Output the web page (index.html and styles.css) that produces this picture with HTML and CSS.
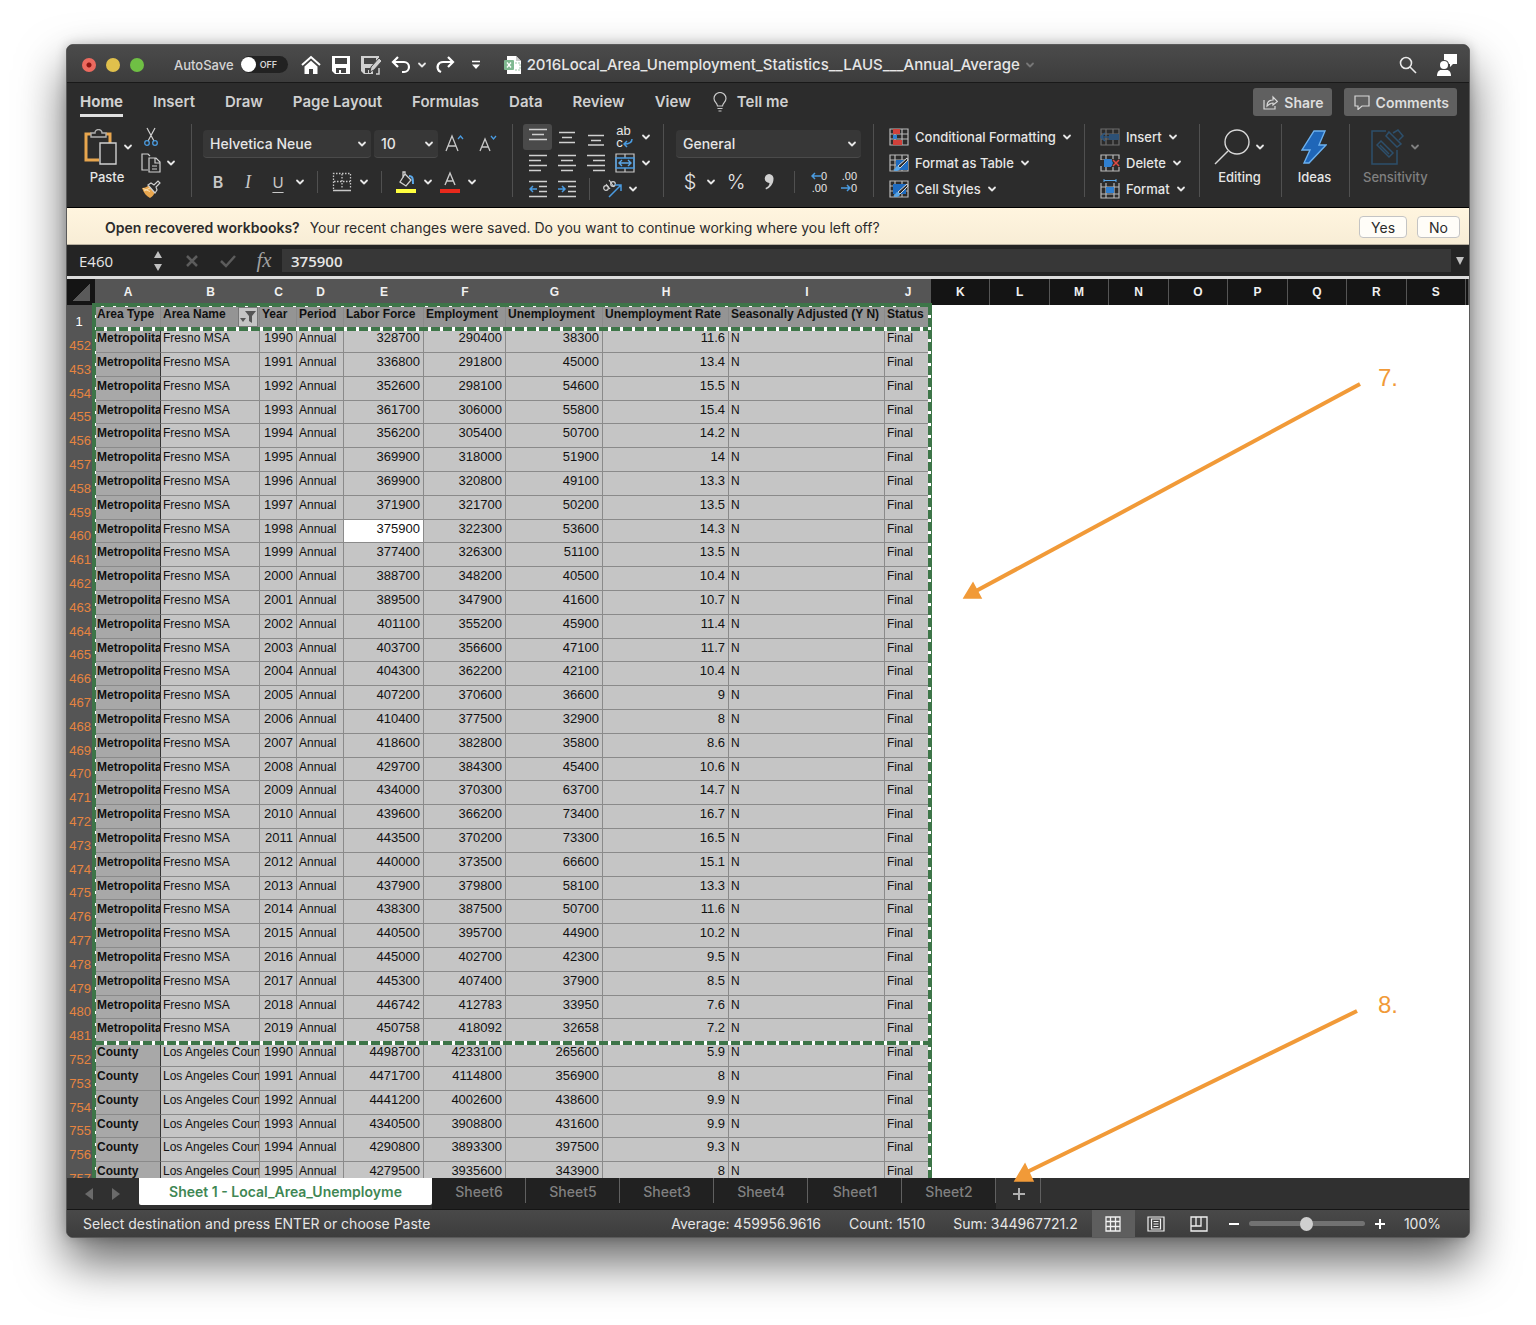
FILE: index.html
```html
<!DOCTYPE html>
<html lang="en">
<head>
  <meta charset="UTF-8" />
  <meta name="viewport" content="width=device-width, initial-scale=1" />
  <title>2016Local_Area_Unemployment_Statistics__LAUS___Annual_Average</title>
  <link rel="stylesheet" href="styles.css">
</head>
<body>

  <svg class="symbols" width="0" height="0">
    <symbol id="chev" viewBox="0 0 10 10"><path d="M2 3.5l3 3 3-3" fill="none" stroke="currentColor" stroke-width="1.8" stroke-linecap="round" stroke-linejoin="round"/></symbol>
    <symbol id="grid-icon" viewBox="0 0 20 18"><path d="M1 1h18v16H1zM1 6h18M1 11h18M6 1v16M13 1v16" fill="none" stroke="#b9b9b9" stroke-width="1.2"/></symbol>
    <symbol id="brush-icon" viewBox="0 0 20 18"><path d="M18 4L9 12l2 2 8-8z" fill="#2c2c2c" stroke="#d8d8d8"/><path d="M9 12c-3 0-2 3-5 4 3 2 7 1 7-2z" fill="#5aa7e8"/></symbol>
  </svg>

  <div class="window">

    <header class="titlebar">
      <div class="lights">
        <button class="light red" aria-label="Close"></button>
        <button class="light yellow" aria-label="Minimize"></button>
        <button class="light green" aria-label="Zoom"></button>
      </div>
      <label class="autosave">AutoSave
        <input type="checkbox">
        <span class="switch">OFF</span>
      </label>
      <div class="quick">
        <button aria-label="Home"><svg width="20" height="20" viewBox="0 0 20 20"><path d="M1 10l9-8 9 8" fill="none" stroke="#fff" stroke-width="2"/><path d="M3.500 11.500L10 5.800l6.500 5.700V19H12v-5H8v5H3.500z" fill="#fff"/></svg></button>
        <button aria-label="Save"><svg width="20" height="20" viewBox="0 0 20 20"><path d="M1 1h18v18H4l-3-3z" fill="#fff"/><path d="M4 3h12v6H4zM5 13h10v5h-5v-3H8v3H5z" fill="#444"/></svg></button>
        <button aria-label="Save as"><svg width="22" height="20" viewBox="0 0 22 20"><path d="M1 1h18v7l-6 7v4H4l-3-3z" fill="#d0d0d0"/><path d="M4 3h12v5l-1 1H4zM5 13h6v5H9v-3H8v3H5z" fill="#444"/><path d="M10 17l1-5 8-9 3 3-8 9z" fill="#d0d0d0" stroke="#444"/><path d="M16 19h3v-6" fill="none" stroke="#d0d0d0" stroke-width="1.500"/></svg></button>
        <button aria-label="Undo"><svg width="20" height="20" viewBox="0 0 20 20"><path d="M7 2L2 7l5 5M2 7h11a5 5 0 0 1 0 10h-2" fill="none" stroke="#fff" stroke-width="2.200"/></svg></button>
        <button class="drop" aria-label="Undo list"><svg width="10" height="10"><use href="#chev"/></svg></button>
        <button class="redo" aria-label="Redo"><svg width="20" height="20" viewBox="0 0 20 20"><path d="M13 2l5 5-5 5M18 7H8c-5 0-7 5-4 9l2 1" fill="none" stroke="#fff" stroke-width="2.200"/></svg></button>
        <button class="more" aria-label="Customize"><svg width="10" height="10" viewBox="0 0 10 10"><path d="M1 1.500h8" stroke="#fff" stroke-width="1.500"/><path d="M1 4.500h8L5 9z" fill="#fff"/></svg></button>
      </div>
      <div class="filename">
        <svg width="18" height="20" viewBox="0 0 18 20"><path d="M3 1h9l5 5v13H3z" fill="#fff"/><path d="M12 1v5h5" fill="#ccc"/><path d="M11 8h5v7h-5" fill="none" stroke="#9fc7ab" stroke-dasharray="2 1"/><rect y="5" width="10" height="10" rx="1" fill="#7fb890"/><path d="M3 7.500l4 5M7 7.500l-4 5" stroke="#fff" stroke-width="1.300"/></svg>
        <span>2016Local_Area_Unemployment_Statistics__LAUS___Annual_Average</span>
        <svg class="faint" width="10" height="10"><use href="#chev"/></svg>
      </div>
      <div class="account">
        <button aria-label="Search"><svg width="18" height="18" viewBox="0 0 18 18" fill="none" stroke="#e8e8e8" stroke-width="1.600"><circle cx="7" cy="7" r="5.500"/><path d="M11 11l6 6"/></svg></button>
        <button aria-label="Account"><svg width="22" height="22" viewBox="0 0 22 22" fill="#fff"><path d="M8 0h13v10h-4l-3 3v-3h-1a5 5 0 0 0-5-4z"/><circle cx="8" cy="11" r="4"/><path d="M1 22c0-4 2-6 4-6h6c2 0 4 2 4 6z"/></svg></button>
      </div>
    </header>

    <nav class="tabs">
      <a class="active" href="#home">Home</a>
      <a href="#insert">Insert</a>
      <a href="#draw">Draw</a>
      <a href="#layout">Page Layout</a>
      <a href="#formulas">Formulas</a>
      <a href="#data">Data</a>
      <a href="#review">Review</a>
      <a href="#view">View</a>
      <a class="tell" href="#tell"><svg width="14" height="20" viewBox="0 0 14 20" fill="none" stroke="#c8c8c8" stroke-width="1.200"><path d="M4.500 14c0-3-3.500-4-3.500-7.500a6 6 0 0 1 12 0C13 10 9.500 11 9.500 14zM4.500 16.500h5M5.500 19h3"/></svg>Tell me</a>
      <div class="actions">
        <button><svg width="15" height="15" viewBox="0 0 15 15" fill="none" stroke="#d8d8d8" stroke-width="1.200"><path d="M1 5v9h11v-3M4 11c0-4 2-6 6-6V2l4.500 4.500L10 10V8c-3 0-4 1-6 3z"/></svg>Share</button>
        <button><svg width="16" height="15" viewBox="0 0 16 15" fill="none" stroke="#d8d8d8" stroke-width="1.200"><path d="M1 1h14v10H8l-4 3.500V11H1z"/></svg>Comments</button>
      </div>
    </nav>

    <div class="ribbon">
      <section class="group clipboard">
        <button class="big">
          <span class="icon-row"><svg width="34" height="36" viewBox="0 0 34 36" fill="none"><path d="M7 5H2v26h13M22 5h4v9" stroke="#e8a64e" stroke-width="3"/><path d="M7 8V4h4a3.500 3.500 0 0 1 7 0h4v4z" stroke="#b0b0b0" stroke-width="1.400"/><path d="M16 14h16v21H16z" fill="#2c2c2c" stroke="#d0d0d0" stroke-width="1.400"/></svg><svg width="10" height="10"><use href="#chev"/></svg></span>
          Paste
        </button>
        <div class="stack">
          <button aria-label="Cut"><svg width="20" height="20" viewBox="0 0 20 20" fill="none"><path d="M6 1l7 13M14 1L7 14" stroke="#d0d0d0" stroke-width="1.200"/><circle cx="6" cy="16" r="2.300" stroke="#4a9be0" stroke-width="1.300"/><circle cx="14" cy="16" r="2.300" stroke="#4a9be0" stroke-width="1.300"/></svg></button>
          <button aria-label="Copy"><svg width="20" height="20" viewBox="0 0 20 20" fill="none" stroke="#d0d0d0" stroke-width="1.200"><path d="M7 17H1V1h6l2 2M8 5h7l4 4v10H8zM14 5v5h5M11 13h5M11 16h5"/></svg><svg width="10" height="10"><use href="#chev"/></svg></button>
          <button aria-label="Format painter"><svg width="20" height="20" viewBox="0 0 20 20"><path d="M1 9c3 0 5-1 7-3l6 7c-1 3-3 5-5 6C5 17 3 14 1 9z" fill="#e8a64e"/><path d="M3 12l6-3M2 9.500l7 3" stroke="#fbe0b0"/><path d="M7 6l3-2 3 2 4-4 2 2-4 4 1 3-2 3z" fill="#2c2c2c" stroke="#d0d0d0" stroke-width="1.200"/></svg></button>
        </div>
      </section>

      <section class="group font">
        <div class="row">
          <div class="select wide"><select aria-label="Font"><option>Helvetica Neue</option></select><svg width="10" height="10"><use href="#chev"/></svg></div>
          <div class="select small"><select aria-label="Font size"><option>10</option></select><svg width="10" height="10"><use href="#chev"/></svg></div>
          <button class="tool size" aria-label="Increase font size"><svg width="20" height="20" viewBox="0 0 20 20" fill="none" stroke="#c8c8c8" stroke-width="1.300"><path d="M1 17L7 2l6 15M3 12h8"/><path d="M13 5l2.500-3L18 5" stroke="#4a9be0"/></svg></button>
          <button class="tool size" aria-label="Decrease font size"><svg width="18" height="20" viewBox="0 0 18 20" fill="none" stroke="#c8c8c8" stroke-width="1.300"><path d="M1 17L6 5l5 12M3 13h6"/><path d="M12 2l2.500 3L17 2" stroke="#4a9be0"/></svg></button>
        </div>
        <div class="row">
          <button class="tool bold">B</button>
          <button class="tool italic">I</button>
          <button class="tool underline">U</button>
          <button class="drop" aria-label="Underline style"><svg width="10" height="10"><use href="#chev"/></svg></button>
          <span class="sep"></span>
          <button class="tool" aria-label="Borders"><svg width="20" height="20" viewBox="0 0 20 20" fill="none" stroke="#c8c8c8"><path d="M1.500 17V1.500h17V17M10 2v15M2 9.500h16" stroke-dasharray="1.500 1.500" stroke-width="1.300"/><path d="M1 18.500h18" stroke-width="1.500"/></svg></button>
          <button class="drop" aria-label="Border list"><svg width="10" height="10"><use href="#chev"/></svg></button>
          <span class="sep"></span>
          <button class="tool" aria-label="Fill color"><svg width="20" height="22" viewBox="0 0 20 22" fill="none"><path d="M9 3l6 6-5 6-6-4zM9 3V1H7v6" stroke="#d0d0d0" stroke-width="1.300"/><path d="M13 5c4 0 4 3 4 8" stroke="#5aa7e8" stroke-width="2"/><path d="M0 18h20v4H0z" fill="#ffff3f"/></svg></button>
          <button class="drop" aria-label="Fill colors"><svg width="10" height="10"><use href="#chev"/></svg></button>
          <button class="tool" aria-label="Font color"><svg width="20" height="22" viewBox="0 0 20 22" fill="none"><path d="M5 14l5-12 5 12M6.500 10h7" stroke="#c8c8c8" stroke-width="1.400"/><path d="M0 18h20v4H0z" fill="#e8291c"/></svg></button>
          <button class="drop" aria-label="Font colors"><svg width="10" height="10"><use href="#chev"/></svg></button>
        </div>
      </section>

      <section class="group align">
        <div class="row">
          <button class="tool on" aria-label="Top align"><svg width="18" height="18" viewBox="0 0 18 18"><path d="M0 1.500h18M3 6.500h12M0 11.500h18" stroke="#d0d0d0" stroke-width="1.400"/></svg></button>
          <button class="tool" aria-label="Middle align"><svg width="18" height="18" viewBox="0 0 18 18"><path d="M1 4.500h16M4 9.500h10M1 14.500h16" stroke="#d0d0d0" stroke-width="1.400"/></svg></button>
          <button class="tool" aria-label="Bottom align"><svg width="18" height="18" viewBox="0 0 18 18"><path d="M1 7.500h16M4 12.500h10M1 17h16" stroke="#d0d0d0" stroke-width="1.400"/></svg></button>
          <button class="tool wrap" aria-label="Wrap text"><span>ab<br>c</span><svg width="10" height="9" viewBox="0 0 10 9" fill="none" stroke="#4a9be0" stroke-width="1.500"><path d="M9 0c0 4-3 5-8 5M4 2L1 5l3 3"/></svg></button>
          <button class="drop" aria-label="Wrap options"><svg width="10" height="10"><use href="#chev"/></svg></button>
        </div>
        <div class="row">
          <button class="tool" aria-label="Align left"><svg width="18" height="18" viewBox="0 0 18 18"><path d="M0 1.500h18M0 6.500h12M0 11.500h18M0 16.500h12" stroke="#d0d0d0" stroke-width="1.400"/></svg></button>
          <button class="tool" aria-label="Center"><svg width="18" height="18" viewBox="0 0 18 18"><path d="M0 1.500h18M3 6.500h12M0 11.500h18M3 16.500h12" stroke="#d0d0d0" stroke-width="1.400"/></svg></button>
          <button class="tool" aria-label="Align right"><svg width="18" height="18" viewBox="0 0 18 18"><path d="M0 1.500h18M6 6.500h12M0 11.500h18M6 16.500h12" stroke="#d0d0d0" stroke-width="1.400"/></svg></button>
          <button class="tool" aria-label="Merge"><svg width="20" height="20" viewBox="0 0 20 20" fill="none"><path d="M1 1h18v18H1zM10 1v4M10 15v4" stroke="#c8c8c8" stroke-width="1.200"/><path d="M1 5h18v10H1z" stroke="#4a9be0" stroke-width="1.400"/><path d="M4 10h12M7 7l-3 3 3 3M13 7l3 3-3 3" stroke="#5aa7e8" stroke-width="1.400"/></svg></button>
          <button class="drop" aria-label="Merge options"><svg width="10" height="10"><use href="#chev"/></svg></button>
        </div>
        <div class="row">
          <button class="tool" aria-label="Decrease indent"><svg width="18" height="18" viewBox="0 0 18 18" fill="none"><path d="M0 1.500h18M10 6.500h8M10 11.500h8M0 16.500h18" stroke="#d0d0d0" stroke-width="1.400"/><path d="M8 9H1M4 6L1 9l3 3" stroke="#4a9be0" stroke-width="1.500"/></svg></button>
          <button class="tool" aria-label="Increase indent"><svg width="18" height="18" viewBox="0 0 18 18" fill="none"><path d="M0 1.500h18M10 6.500h8M10 11.500h8M0 16.500h18" stroke="#d0d0d0" stroke-width="1.400"/><path d="M0 9h7M4 6l3 3-3 3" stroke="#4a9be0" stroke-width="1.500"/></svg></button>
          <span class="sep"></span>
          <button class="tool" aria-label="Orientation"><svg width="20" height="20" viewBox="0 0 20 20" fill="none"><circle cx="4" cy="9" r="2.300" stroke="#d0d0d0" stroke-width="1.200"/><path d="M4 5l4 5M7 1l5 7" stroke="#d0d0d0" stroke-width="1.200"/><circle cx="11" cy="5" r="2.300" stroke="#d0d0d0" stroke-width="1.200"/><path d="M7 18L19 6M13 6h6v6" stroke="#4a9be0" stroke-width="1.500"/></svg></button>
          <button class="drop" aria-label="Orientation options"><svg width="10" height="10"><use href="#chev"/></svg></button>
        </div>
      </section>

      <section class="group number">
        <div class="row">
          <div class="select format"><select aria-label="Number format"><option>General</option></select><svg width="10" height="10"><use href="#chev"/></svg></div>
        </div>
        <div class="row">
          <button class="tool sign">$</button>
          <button class="drop" aria-label="Currency"><svg width="10" height="10"><use href="#chev"/></svg></button>
          <button class="tool sign percent">%</button>
          <button class="tool" aria-label="Comma style"><svg width="10" height="16" viewBox="0 0 10 16"><path d="M5 0a4.500 4.500 0 0 1 4.500 5C9.500 10 6 14 2 15.500L1.500 14C4 13 5.500 11 5.500 9A4.500 4.500 0 1 1 5 0z" fill="#d0d0d0"/></svg></button>
          <span class="sep"></span>
          <button class="tool dec"><span><svg width="10" height="8" viewBox="0 0 10 8" fill="none" stroke="#4a9be0" stroke-width="1.500"><path d="M10 4H1M4 1L1 4l3 3"/></svg>0</span><span>.00</span></button>
          <button class="tool dec"><span>.00</span><span><svg width="10" height="8" viewBox="0 0 10 8" fill="none" stroke="#4a9be0" stroke-width="1.500"><path d="M0 4h9M6 1l3 3-3 3"/></svg>0</span></button>
        </div>
      </section>

      <section class="group styles">
        <button class="line"><svg width="20" height="18" viewBox="0 0 20 18"><use href="#grid-icon"/><path d="M4 1h7v5H4zM4 12h9v5H4z" fill="#d0413b"/><path d="M4 7h4v4H4z" fill="#2f7fd0"/></svg>Conditional Formatting<svg width="10" height="10"><use href="#chev"/></svg></button>
        <button class="line"><svg width="20" height="18" viewBox="0 0 20 18"><use href="#grid-icon"/><path d="M7 6h12v10H7z" fill="#1e6bc0"/><use href="#brush-icon"/></svg>Format as Table<svg width="10" height="10"><use href="#chev"/></svg></button>
        <button class="line"><svg width="20" height="18" viewBox="0 0 20 18"><use href="#grid-icon"/><path d="M4 4h13v10H4z" fill="#1e6bc0"/><use href="#brush-icon"/></svg>Cell Styles<svg width="10" height="10"><use href="#chev"/></svg></button>
      </section>

      <section class="group cells">
        <button class="line"><svg width="20" height="18" viewBox="0 0 20 18"><g opacity=".45"><use href="#grid-icon"/><path d="M9 6h10v6H9z" fill="#2f7fd0"/></g><path d="M10 9H2M5 5L1 9l4 4" fill="none" stroke="#2b5680" stroke-width="1.600"/></svg>Insert<svg width="10" height="10"><use href="#chev"/></svg></button>
        <button class="line"><svg width="20" height="18" viewBox="0 0 20 18"><use href="#grid-icon"/><path d="M0 6h4v6H0zM12 5h8v8h-8z" fill="#2c2c2c"/><path d="M4 5h7l2 4-2 4H4z" fill="#2f7fd0"/><path d="M13 6l6 6M19 6l-6 6" stroke="#e04b45" stroke-width="1.500"/></svg>Delete<svg width="10" height="10"><use href="#chev"/></svg></button>
        <button class="line"><svg width="20" height="20" viewBox="0 0 20 20"><path d="M1 4v15h18V4M1 8h18M1 15h18M6 4v15M14 4v15" fill="none" stroke="#b9b9b9" stroke-width="1.200"/><path d="M6 8h8v6H6z" fill="#2f7fd0"/><path d="M4 1.500h12M4 0v3M16 0v3" stroke="#5aa7e8"/></svg>Format<svg width="10" height="10"><use href="#chev"/></svg></button>
      </section>

      <section class="group editing">
        <button class="big"><span class="icon-row"><svg width="36" height="36" viewBox="0 0 36 36" fill="none" stroke="#d8d8d8" stroke-width="1.400"><circle cx="23" cy="13" r="12"/><path d="M14 22L1 35"/></svg><svg width="10" height="10"><use href="#chev"/></svg></span>Editing</button>
      </section>
      <section class="group ideas">
        <button class="big"><span class="icon-row"><svg width="26" height="34" viewBox="0 0 26 34"><path d="M13 1h11l-6 14h7L8 33H3l6-13H1z" fill="#1f66b8" stroke="#6bb0ee" stroke-width="1.400"/></svg></span>Ideas</button>
      </section>
      <section class="group sensitivity">
        <button class="big" disabled><span class="icon-row"><svg width="34" height="36" viewBox="0 0 34 36" fill="none" stroke="#2d4f6b" stroke-width="1.500"><path d="M15 2H1v33h25V21M6 16l4-4 12 12-4 4zM9 16l9 9M18 3l12 12-4 3L15 7zM22 4l5-3 5 6-4 4"/></svg><svg width="10" height="10"><use href="#chev"/></svg></span>Sensitivity</button>
      </section>
    </div>

    <div class="message">
      <p><strong>Open recovered workbooks?</strong> Your recent changes were saved. Do you want to continue working where you left off?</p>
      <button>Yes</button>
      <button>No</button>
    </div>

    <div class="formula-bar">
      <input class="name-box" type="text" value="E460" aria-label="Name box">
      <svg width="10" height="22" viewBox="0 0 10 22" fill="#c0c0c0"><path d="M1 8l4-7 4 7zM1 14h8l-4 7z"/></svg>
      <button aria-label="Cancel"><svg width="14" height="14" viewBox="0 0 14 14" stroke="#5c5c5c" stroke-width="2.500"><path d="M2 2l10 10M12 2L2 12"/></svg></button>
      <button aria-label="Enter"><svg width="18" height="14" viewBox="0 0 18 14" fill="none" stroke="#5c5c5c" stroke-width="2.500"><path d="M2 7l5 5L16 2"/></svg></button>
      <button class="fx">fx</button>
      <input class="formula" type="text" value="375900" aria-label="Formula">
      <button class="expand" aria-label="Expand"><svg width="10" height="10" viewBox="0 0 10 10"><path d="M1 1h8L5 9z" fill="#c0c0c0"/></svg></button>
    </div>

    <main class="sheet">
      <table>
        <colgroup>
          <col class="c-row"><col class="c-a"><col class="c-b"><col class="c-c"><col class="c-d"><col class="c-e">
          <col class="c-f"><col class="c-g"><col class="c-h"><col class="c-i"><col class="c-j">
          <col><col><col><col><col><col><col><col><col><col class="c-end">
        </colgroup>
        <thead>
          <tr>
            <th class="corner"></th>
            <th>A</th><th>B</th><th>C</th><th>D</th><th>E</th><th>F</th><th>G</th><th>H</th><th>I</th><th>J</th>
            <th class="free">K</th><th class="free">L</th><th class="free">M</th><th class="free">N</th><th class="free">O</th><th class="free">P</th><th class="free">Q</th><th class="free">R</th><th class="free">S</th><th class="free"></th>
          </tr>
        </thead>
        <tbody id="rows">
          <tr class="names">
            <th>1</th>
            <td>Area Type</td>
            <td>Area Name<button class="filter" aria-label="Filter"><svg width="16" height="14" viewBox="0 0 16 14" fill="#555"><path d="M5 1h11l-4 5v7l-3-2V6zM0 8h6l-3 4z"/></svg></button></td>
            <td>Year</td><td>Period</td><td>Labor Force</td><td>Employment</td><td>Unemployment</td><td>Unemployment Rate</td><td>Seasonally Adjusted (Y N)</td><td>Status</td>
          </tr>
        </tbody>
      </table>
      <div class="ants top"></div>
      <div class="ants under-names"></div>
      <div class="ants under-fresno"></div>
      <div class="ants left"></div>
      <div class="ants right"></div>
    </main>

    <div class="sheet-tabs">
      <button class="move" aria-label="Previous sheet"><svg width="10" height="14" viewBox="0 0 10 14"><path d="M9 1v12L1 7z" fill="#6a6a6a"/></svg></button>
      <button class="move" aria-label="Next sheet"><svg width="10" height="14" viewBox="0 0 10 14"><path d="M1 1v12l8-6z" fill="#6a6a6a"/></svg></button>
      <button class="tab active">Sheet 1 - Local_Area_Unemployme</button>
      <button class="tab">Sheet6</button>
      <button class="tab">Sheet5</button>
      <button class="tab">Sheet3</button>
      <button class="tab">Sheet4</button>
      <button class="tab">Sheet1</button>
      <button class="tab">Sheet2</button>
      <button class="add" aria-label="Add sheet"><svg width="12" height="12" viewBox="0 0 12 12" stroke="#b0b0b0" stroke-width="2"><path d="M6 0v12M0 6h12"/></svg></button>
    </div>

    <footer class="status">
      <span class="hint">Select destination and press ENTER or choose Paste</span>
      <span>Average: 459956.9616</span>
      <span>Count: 1510</span>
      <span>Sum: 344967721.2</span>
      <div class="views">
        <button class="on" aria-label="Normal view"><svg width="16" height="16" viewBox="0 0 16 16" fill="none" stroke="#f0f0f0" stroke-width="1.300"><path d="M1 1h14v14H1zM1 5.500h14M1 10.500h14M5.500 1v14M10.500 1v14"/></svg></button>
        <button aria-label="Page layout view"><svg width="18" height="16" viewBox="0 0 18 16" fill="none" stroke="#f0f0f0" stroke-width="1.200"><path d="M1 1h16v14H1zM4.500 3h9v10h-9zM6.500 5.500h5M6.500 8h5M6.500 10.500h5"/></svg></button>
        <button aria-label="Page break view"><svg width="18" height="16" viewBox="0 0 18 16" fill="none" stroke="#f0f0f0" stroke-width="1.300"><path d="M1 1h16v14H1zM1 10h10V1M6 1v9"/></svg></button>
      </div>
      <div class="zoom">
        <button aria-label="Zoom out"><svg width="10" height="10" viewBox="0 0 10 10"><path d="M0 5h10" stroke="#fff" stroke-width="2"/></svg></button>
        <input type="range" min="0" max="100" value="50" aria-label="Zoom">
        <button aria-label="Zoom in"><svg width="10" height="10" viewBox="0 0 10 10"><path d="M0 5h10M5 0v10" stroke="#fff" stroke-width="2"/></svg></button>
        <output>100%</output>
      </div>
    </footer>

    <!-- tutorial notes over the sheet -->
    <div class="note seven">
      <svg width="400" height="218" viewBox="0 0 400 218"><path d="M398 2L14 209" stroke="#f19a38" stroke-width="4"/><path d="M2 216l9-15 8 15z" fill="#f19a38" stroke="#f19a38" stroke-width="1.500"/></svg>
      <span>7.</span>
    </div>
    <div class="note eight">
      <svg width="346" height="174" viewBox="0 0 346 174"><path d="M344 2L14 163" stroke="#f19a38" stroke-width="4"/><path d="M2 172l10-17 8 17z" fill="#f19a38" stroke="#f19a38" stroke-width="1.500"/></svg>
      <span>8.</span>
    </div>
  </div>

  <script>
    // row number, year, labor force, employment, unemployment, rate
    const fresno = [
      [452, 1990, 328700, 290400, 38300, 11.6],
      [453, 1991, 336800, 291800, 45000, 13.4],
      [454, 1992, 352600, 298100, 54600, 15.5],
      [455, 1993, 361700, 306000, 55800, 15.4],
      [456, 1994, 356200, 305400, 50700, 14.2],
      [457, 1995, 369900, 318000, 51900, 14],
      [458, 1996, 369900, 320800, 49100, 13.3],
      [459, 1997, 371900, 321700, 50200, 13.5],
      [460, 1998, 375900, 322300, 53600, 14.3],
      [461, 1999, 377400, 326300, 51100, 13.5],
      [462, 2000, 388700, 348200, 40500, 10.4],
      [463, 2001, 389500, 347900, 41600, 10.7],
      [464, 2002, 401100, 355200, 45900, 11.4],
      [465, 2003, 403700, 356600, 47100, 11.7],
      [466, 2004, 404300, 362200, 42100, 10.4],
      [467, 2005, 407200, 370600, 36600, 9],
      [468, 2006, 410400, 377500, 32900, 8],
      [469, 2007, 418600, 382800, 35800, 8.6],
      [470, 2008, 429700, 384300, 45400, 10.6],
      [471, 2009, 434000, 370300, 63700, 14.7],
      [472, 2010, 439600, 366200, 73400, 16.7],
      [473, 2011, 443500, 370200, 73300, 16.5],
      [474, 2012, 440000, 373500, 66600, 15.1],
      [475, 2013, 437900, 379800, 58100, 13.3],
      [476, 2014, 438300, 387500, 50700, 11.6],
      [477, 2015, 440500, 395700, 44900, 10.2],
      [478, 2016, 445000, 402700, 42300, 9.5],
      [479, 2017, 445300, 407400, 37900, 8.5],
      [480, 2018, 446742, 412783, 33950, 7.6],
      [481, 2019, 450758, 418092, 32658, 7.2]
    ];
    const losAngeles = [
      [752, 1990, 4498700, 4233100, 265600, 5.9],
      [753, 1991, 4471700, 4114800, 356900, 8],
      [754, 1992, 4441200, 4002600, 438600, 9.9],
      [755, 1993, 4340500, 3908800, 431600, 9.9],
      [756, 1994, 4290800, 3893300, 397500, 9.3],
      [757, 1995, 4279500, 3935600, 343900, 8]
    ];

    const rows = document.getElementById("rows");

    function addRows(list, type, name) {
      list.forEach(([num, year, ...values]) => {
        const tr = document.createElement("tr");
        const cells = values.map((v, i) =>
          `<td class="num${num === 460 && i === 0 ? " current" : ""}">${v}</td>`
        ).join("");
        tr.innerHTML = `<th>${num}</th><td class="type">${type}</td><td>${name}</td>` +
          `<td class="num">${year}</td><td>Annual</td>${cells}<td>N</td><td>Final</td>`;
        rows.appendChild(tr);
      });
    }

    addRows(fresno, "Metropolita", "Fresno MSA");
    addRows(losAngeles, "County", "Los Angeles Coun");
  </script>

</body>
</html>
```
FILE: styles.css
```css
* {
  box-sizing: border-box;
}

body {
  margin: 0;
  height: 100vh;
  padding: 44px 66px 87px 66px;
  background: #fff;
  color: #e6e6e6;
  font-family: Inter, "Liberation Sans", sans-serif;
  font-size: 14px;
}

.symbols {
  position: absolute;
}

button {
  display: flex;
  align-items: center;
  justify-content: center;
  margin: 0;
  padding: 0;
  border: 0;
  background: none;
  color: inherit;
  font: inherit;
}

input, select {
  font: inherit;
  color: inherit;
}

svg {
  flex: none;
}

.window {
  position: relative;
  display: flex;
  flex-direction: column;
  height: 100%;
  border: 1px solid #5a5a5a;
  border-radius: 7px;
  overflow: hidden;
  background: #2c2c2c;
  box-shadow: 0 24px 48px rgba(0, 0, 0, 0.6), 0 0 12px rgba(0, 0, 0, 0.2);
}

/* title bar */
.titlebar {
  display: flex;
  align-items: center;
  flex: none;
  height: 38px;
  padding: 2px 11px 0 15px;
  background: linear-gradient(#4b4b4b, #3c3c3c);
  border-bottom: 1px solid #191919;
}

.lights {
  display: flex;
  gap: 10px;
}

.light {
  width: 14px;
  height: 14px;
  border-radius: 50%;
}

.light.red {
  background: radial-gradient(circle, #8c1410 2px, #ed6a5f 3px);
}

.light.yellow {
  background: #e0c04c;
}

.light.green {
  background: #6fbf44;
}

.autosave {
  display: flex;
  align-items: center;
  gap: 7px;
  margin-left: 30px;
  font-size: 13px;
  font-weight: 500;
  color: #d4d4d4;
}

.autosave input {
  position: absolute;
  opacity: 0;
}

.switch {
  display: flex;
  align-items: center;
  gap: 4px;
  width: 47px;
  height: 17px;
  border-radius: 9px;
  background: #222;
  font-size: 9px;
  font-weight: 600;
}

.switch::before {
  content: "";
  width: 15px;
  height: 15px;
  border-radius: 50%;
  background: #fff;
}

.quick {
  display: flex;
  align-items: center;
  margin-left: 8px;
}

.quick button {
  width: 30px;
}

.quick .drop {
  width: 12px;
}

.quick button.redo {
  width: 34px;
}

.quick button.more {
  width: 28px;
}

.filename {
  display: flex;
  align-items: center;
  gap: 5px;
  margin-left: 14px;
  font-weight: 500;
  font-size: 15px;
}

.faint {
  color: #777;
}

.account {
  display: flex;
  gap: 19px;
  margin-left: auto;
}

/* ribbon tabs */
.tabs {
  display: flex;
  align-items: center;
  flex: none;
  gap: 30px;
  height: 38px;
  padding: 0 12px 0 13px;
  font-size: 15px;
  font-weight: 600;
}

.tabs a {
  padding-top: 2px;
  color: #d0d0d0;
  text-decoration: none;
  line-height: 24px;
  border-bottom: 3px solid transparent;
}

.tabs a.active {
  font-weight: 700;
  border-bottom-color: #e0e0e0;
}

.tabs a.tell {
  display: flex;
  align-items: center;
  gap: 10px;
  margin-left: -8px;
}

.actions {
  display: flex;
  gap: 12px;
  margin-left: auto;
}

.actions button {
  gap: 6px;
  height: 28px;
  padding: 0 8px 0 10px;
  border-radius: 3px;
  background: #606060;
  color: #dedede;
  font-size: 14px;
  font-weight: 600;
}

/* ribbon */
.ribbon {
  display: flex;
  flex: none;
  height: 87px;
  border-bottom: 1px solid #000;
  font-size: 13px;
  font-weight: 500;
}

.group {
  display: flex;
  flex-direction: column;
  flex: none;
  margin-top: 3px;
  background: linear-gradient(#505050, #505050) right top / 1px 73px no-repeat;
}

.row {
  display: flex;
  align-items: center;
}

.clipboard {
  flex-direction: row;
  width: 125px;
  padding-left: 17px;
}

.clipboard .big {
  width: 46px;
}

.clipboard .icon-row {
  align-self: flex-start;
}

.stack {
  display: flex;
  flex-direction: column;
  margin-left: 11px;
}

.stack button {
  justify-content: flex-start;
  gap: 5px;
  height: 26px;
}

.big {
  flex-direction: column;
  gap: 2px;
  height: 64px;
}

.big:disabled {
  color: #808080;
}

.icon-row {
  display: flex;
  align-items: center;
  gap: 5px;
  height: 40px;
}

.font {
  width: 321px;
  gap: 11px;
  padding: 6px 0 0 11px;
}

.align {
  width: 151px;
  padding-left: 10px;
}

.number {
  width: 210px;
  gap: 11px;
  padding: 6px 0 0 12px;
}

.styles {
  width: 211px;
  padding-left: 15px;
}

.cells {
  width: 115px;
  padding-left: 15px;
}

.editing {
  width: 82px;
  align-items: center;
  padding-right: 3px;
}

.ideas {
  width: 68px;
  align-items: center;
  padding-right: 3px;
}

.group.sensitivity {
  padding-left: 13px;
  background: none;
}

.select {
  display: grid;
  align-items: center;
}

.select select,
.select svg {
  grid-area: 1 / 1;
}

.select svg {
  justify-self: end;
  margin-right: 4px;
  pointer-events: none;
}

.select select {
  appearance: none;
  width: 100%;
  height: 28px;
  padding: 0 7px;
  border: 0;
  border-bottom: 1px solid #4a4a4a;
  border-radius: 4px;
  background: #373737;
  font-size: 14px;
  font-weight: 500;
}

.select.wide {
  width: 168px;
}

.select.small {
  width: 64px;
  margin-left: 3px;
}

.select.format {
  width: 185px;
}

.tool {
  width: 30px;
  height: 26px;
}

.tool.size {
  width: 33px;
}

.align .tool {
  width: 29px;
  height: 26px;
}

.tool.on {
  border-radius: 3px;
  background: #4a4a4a;
}

.drop {
  width: 14px;
  height: 20px;
}

.sep {
  width: 20px;
  height: 22px;
  background: linear-gradient(#505050, #505050) center / 1px 100% no-repeat;
}

.align .sep {
  width: 16px;
}

.bold {
  font-size: 16px;
  font-weight: 600;
  color: #c8c8c8;
}

.italic {
  font: italic 18px "Liberation Serif", serif;
  color: #c8c8c8;
}

.underline {
  font-size: 15px;
  font-weight: 400;
  text-decoration: underline;
  text-underline-offset: 4px;
  color: #c8c8c8;
}

.wrap {
  align-items: center;
  font-family: "Liberation Sans", sans-serif;
  font-size: 13px;
  font-weight: 400;
  line-height: 12px;
  text-align: left;
}

.wrap span {
  margin-right: -8px;
}

.wrap svg {
  margin-top: 12px;
}

.sign {
  width: 28px;
  font-size: 20px;
  font-weight: 300;
}

.sign.percent {
  width: 36px;
}

.dec {
  flex-direction: column;
  align-items: flex-end;
  font-family: "Liberation Sans", sans-serif;
  font-size: 11px;
  font-weight: 400;
  line-height: 12px;
  padding-right: 7px;
}

.line {
  justify-content: flex-start;
  gap: 6px;
  height: 26px;
  white-space: nowrap;
}

/* recovered workbooks message */
.message {
  display: flex;
  align-items: center;
  flex: none;
  gap: 10px;
  height: 37px;
  padding: 2px 9px 0 38px;
  background: linear-gradient(#fff5df, #f8edd6);
  border-bottom: 1px solid #b8b0a0;
  color: #2b2b2b;
}

.message p {
  flex: 1;
  margin: 0;
}

.message strong {
  margin-right: 6px;
  font-weight: 600;
}

.message button {
  height: 22px;
  padding: 0 11px;
  border: 1px solid #c4c4c4;
  border-radius: 4px;
  background: #fffdf8;
}

/* formula bar */
.formula-bar {
  display: flex;
  align-items: center;
  flex: none;
  height: 34px;
  background: #242424;
  border-bottom: 3px solid #dcdcdc;
}

.formula-bar input {
  border: 0;
  outline: 0;
  font-family: "Open Sans", sans-serif;
  font-size: 15px;
}

.name-box {
  width: 86px;
  padding: 0 0 0 12px;
  background: none;
}

.formula-bar svg + button {
  margin-left: 11px;
}

.formula-bar button {
  width: 36px;
}

.formula-bar button.fx {
  font: italic 21px "Liberation Serif", serif;
  color: #a0a0a0;
}

.formula {
  flex: 1;
  height: 23px;
  padding: 0 9px;
  background: #373737;
  font-weight: 600;
}

.formula-bar button.expand {
  width: 18px;
}

/* sheet */
.sheet {
  position: relative;
  flex: 1;
  min-height: 0;
  overflow: hidden;
  background: #fff;
  font-family: "Liberation Sans", sans-serif;
  font-size: 12px;
  color: #111;
}

table {
  width: 100%;
  table-layout: fixed;
  border-spacing: 0;
}

.c-row { width: 28px; }
.c-a { width: 66px; }
.c-b { width: 99px; }
.c-c { width: 37px; }
.c-d { width: 47px; }
.c-e { width: 80px; }
.c-f { width: 82px; }
.c-g { width: 97px; }
.c-h { width: 126px; }
.c-i { width: 156px; }
.c-j { width: 46px; }
.c-end { width: 3px; }

thead tr {
  height: 26px;
}

thead th {
  padding: 0;
  background: #555;
  color: #f0f0f0;
  font-size: 12px;
}

thead th.free {
  background: #141414;
  border-right: 1px solid #555;
}

thead th.corner {
  background: linear-gradient(135deg, #141414 50%, #5a5a5a 50%) center / 18px 18px no-repeat #141414;
}

tbody tr {
  height: 24px;
}

tbody tr:nth-child(5n) {
  height: 23px;
}

tbody th {
  padding: 0 4px 0 0;
  vertical-align: bottom;
  text-align: right;
  background: #555;
  color: #e58440;
  font-size: 13px;
  font-weight: 400;
  line-height: 15px;
}

tbody td {
  padding: 1px 0 0 2px;
  vertical-align: top;
  overflow: hidden;
  white-space: nowrap;
  background: #c5c5c5;
  border-right: 1px solid #8a8a8a;
  border-bottom: 1px solid #8a8a8a;
  line-height: 16px;
}

.num {
  padding-right: 3px;
  text-align: right;
  font-size: 13px;
}

.type {
  background: #a8a8a8;
  border-right-color: #333;
  font-weight: 700;
}

.current {
  background: #fff;
}

.names td {
  position: relative;
  background: #949494;
  font-weight: 700;
}

.names th {
  color: #fff;
  text-align: center;
}

.filter {
  position: absolute;
  top: 2px;
  right: 1px;
  width: 20px;
  height: 20px;
  border: 1px solid #777;
  background: #c4c4c4;
}

/* marching ants round the copied rows */
.ants {
  position: absolute;
}

.ants.top {
  top: 24px;
  left: 25px;
  width: 840px;
  height: 4px;
  background: repeating-linear-gradient(90deg, #3d7548 0 9px, #fff 9px 12px) bottom / 100% 1px no-repeat #3d7548;
}

.ants.under-names,
.ants.under-fresno {
  left: 28px;
  width: 836px;
  height: 4px;
  background: repeating-linear-gradient(90deg, #3d7548 0 9px, #fff 9px 12px);
}

.ants.under-names {
  top: 48px;
}

.ants.under-fresno {
  top: 762px;
}

.ants.left,
.ants.right {
  top: 27px;
  bottom: 0;
  width: 4px;
}

.ants.left {
  left: 25px;
  background: repeating-linear-gradient(#3d7548 0 9px, #fff 9px 12px) right / 1px 100% no-repeat #3d7548;
}

.ants.right {
  left: 861px;
  background: repeating-linear-gradient(#3d7548 0 9px, #fff 9px 12px) left / 3px 100% no-repeat #3d7548;
}

/* sheet tabs */
.sheet-tabs {
  display: flex;
  flex: none;
  height: 32px;
  padding-left: 8px;
  background: #303030;
  border-bottom: 1px solid #151515;
}

.move {
  width: 27px;
  height: 32px;
}

.tab {
  width: 94px;
  padding-bottom: 4px;
  background: linear-gradient(#606060, #606060) right top / 1px 25px no-repeat #212121;
  color: #808080;
  font-weight: 500;
}

.tab.active {
  width: 293px;
  height: 27px;
  margin-left: 10px;
  padding-bottom: 0;
  border-radius: 0 0 2px 2px;
  background: #fff;
  color: #3f8754;
  font-weight: 600;
}

.add {
  width: 45px;
  background: linear-gradient(#606060, #606060) right top / 1px 25px no-repeat;
}

/* status bar */
.status {
  display: flex;
  align-items: center;
  flex: none;
  gap: 28px;
  height: 27px;
  background: linear-gradient(#494949, #3d3d3d);
}

.hint {
  flex: 1;
  padding-left: 16px;
}

.views {
  display: flex;
  align-self: stretch;
  margin-left: -14px;
}

.views button {
  width: 43px;
}

.views .on {
  background: #5e5e5e;
}

.zoom {
  display: flex;
  align-items: center;
  gap: 10px;
  margin-left: -20px;
  padding-right: 28px;
}

.zoom input {
  appearance: none;
  width: 116px;
  height: 5px;
  margin: 0;
  border-radius: 3px;
  background: #727272;
}

.zoom input::-webkit-slider-thumb {
  appearance: none;
  width: 13px;
  height: 14px;
  border-radius: 50%;
  background: #cfcfcf;
}

.zoom output {
  margin-left: 9px;
}

/* notes */
.note {
  position: absolute;
  display: flex;
  align-items: flex-start;
  font: 24px "Liberation Sans", sans-serif;
  color: #f19a38;
}

.note.seven {
  top: 337px;
  left: 895px;
  gap: 16px;
}

.note.eight {
  top: 964px;
  left: 946px;
  gap: 19px;
}

.note span {
  margin-top: -18px;
}
```
